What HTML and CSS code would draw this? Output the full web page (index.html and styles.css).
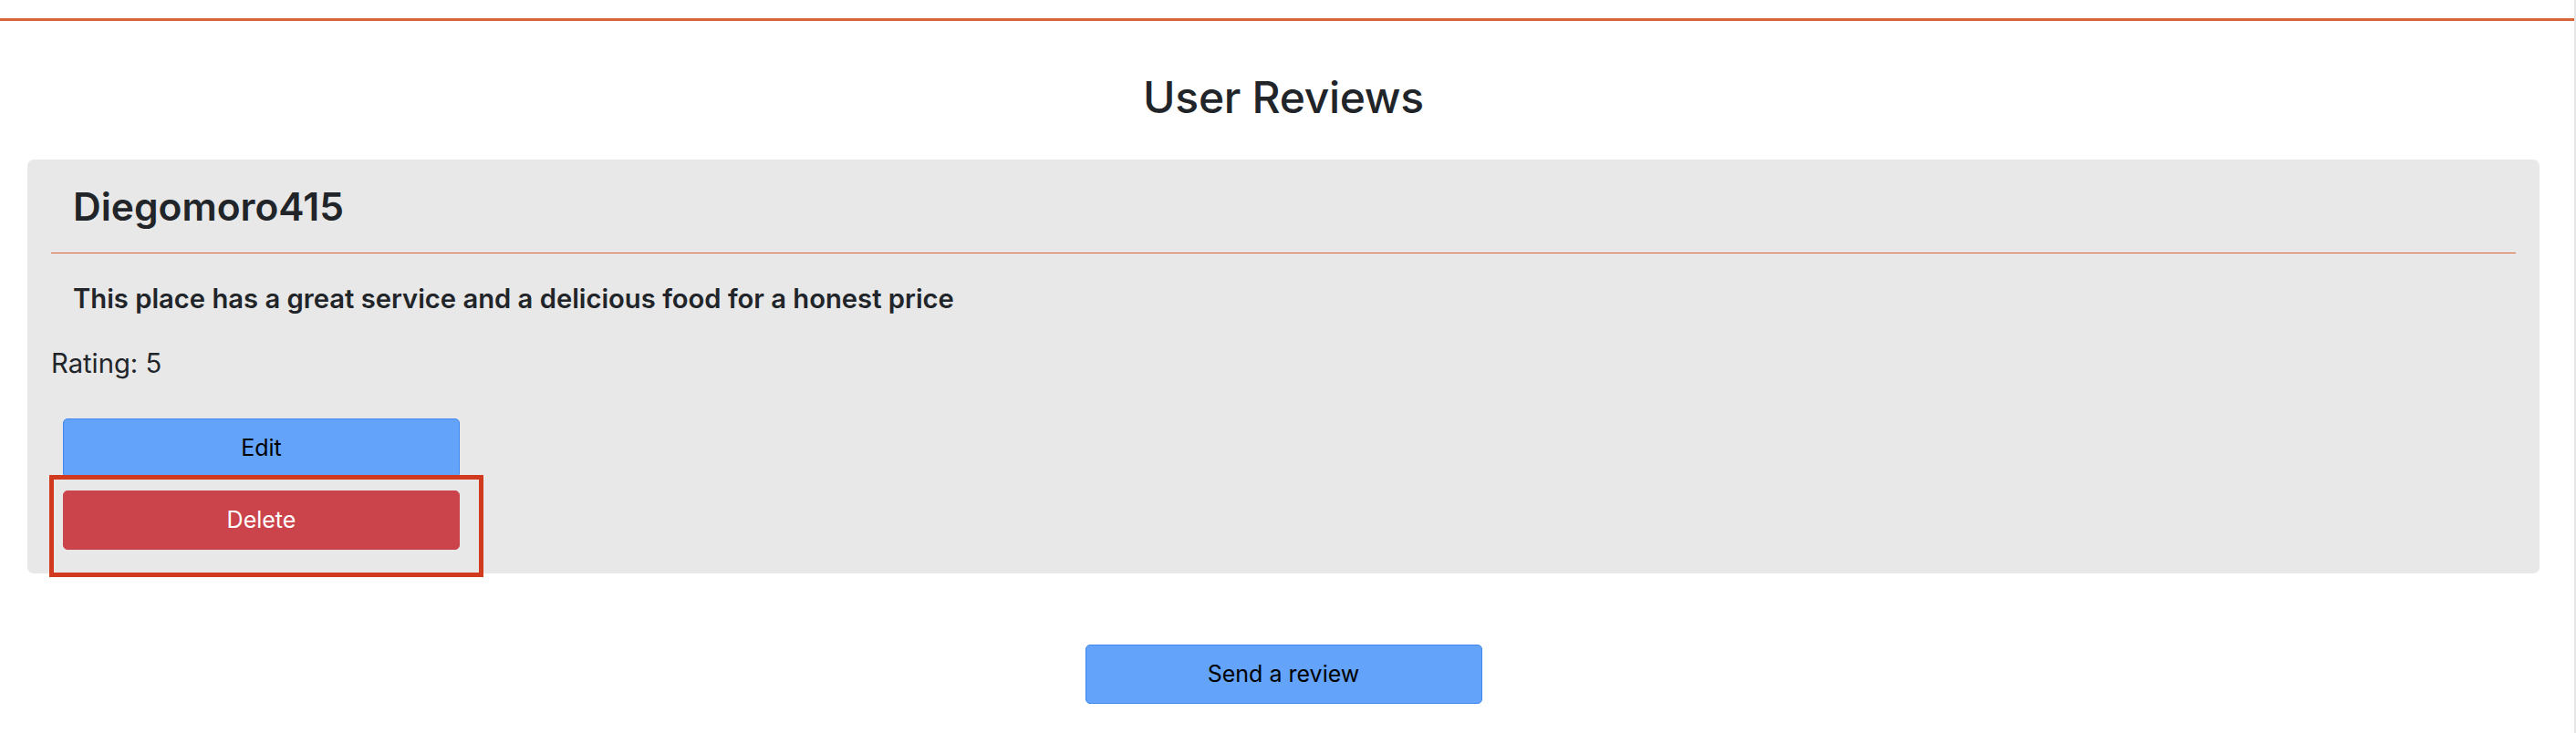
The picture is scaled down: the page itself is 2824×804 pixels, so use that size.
FILE: index.html
```html
<!DOCTYPE html>
<html lang="en">
<head>
<meta charset="utf-8">
<title>User Reviews</title>
<link rel="stylesheet" href="styles.css">
</head>
<body>
<div class="page">
  <header class="topbar"></header>
  <main class="container">
    <h2 class="title">User Reviews</h2>
    <section class="card">
      <h3 class="name">Diegomoro415</h3>
      <hr class="divider">
      <p class="review">This place has a great service and a delicious food for a honest price</p>
      <p class="rating">Rating: 5</p>
      <div class="actions">
        <button class="btn btn-blue">Edit</button>
        <div class="highlight-wrap">
          <button class="btn btn-red">Delete</button>
          <span class="highlight"></span>
        </div>
      </div>
    </section>
    <div class="send-row">
      <button class="btn btn-blue">Send a review</button>
    </div>
  </main>
</div>
</body>
</html>
```

FILE: styles.css
```css
* { box-sizing: border-box; }
html, body { margin: 0; padding: 0; background: #ffffff; }
body {
  font-family: Inter, "Noto Sans", "Liberation Sans", sans-serif;
  color: #212529;
}
.page {
  width: 2824px;
  min-height: 804px;
  border-right: 2px solid #e6e6e6;
}
.topbar {
  height: 23px;
  border-bottom: 3px solid #d9643a;
}
.container {
  margin-left: 30px;
  width: 2754px;
}
.title {
  margin: 55px 0 39px;
  font-size: 48px;
  font-weight: 500;
  line-height: 1.2;
  text-align: center;
  letter-spacing: -0.3px;
}
.card {
  background: #e8e8e8;
  border-radius: 7px;
  padding: 27px 26px 26px 26px;
}
.name {
  margin: 0;
  padding-left: 24px;
  font-size: 42.5px;
  font-weight: 600;
  line-height: 50.4px;
}
.divider {
  margin: 25px 0 0;
  border: 0;
  height: 1px;
  background: #d9643a;
}
.review {
  margin: 33px 0 0;
  padding-left: 24px;
  font-size: 29.2px;
  font-weight: 600;
  line-height: 34.8px;
}
.rating {
  margin: 36px 0 0;
  font-size: 29.2px;
  font-weight: 400;
  line-height: 34.8px;
}
.actions {
  margin-top: 42px;
  margin-left: 13px;
  display: flex;
  flex-direction: column;
  gap: 14px;
  align-items: flex-start;
}
.btn {
  width: 435px;
  height: 65px;
  border-radius: 5px;
  font-family: Inter, "Noto Sans", "Liberation Sans", sans-serif;
  font-size: 25px;
  font-weight: 400;
  cursor: pointer;
  padding: 0;
}
.btn-blue {
  background: #63a3f9;
  border: 1.5px solid #3f86ee;
  color: #000000;
}
.btn-red {
  background: #cb444b;
  border: 1px solid #cb444b;
  color: #ffffff;
  display: block;
}
.highlight-wrap {
  position: relative;
}
.highlight {
  position: absolute;
  top: -17px;
  left: -15px;
  right: -26px;
  bottom: -30px;
  border: 5px solid #d23a1f;
  pointer-events: none;
}
.send-row {
  margin-top: 78px;
  display: flex;
  justify-content: center;
}
```
